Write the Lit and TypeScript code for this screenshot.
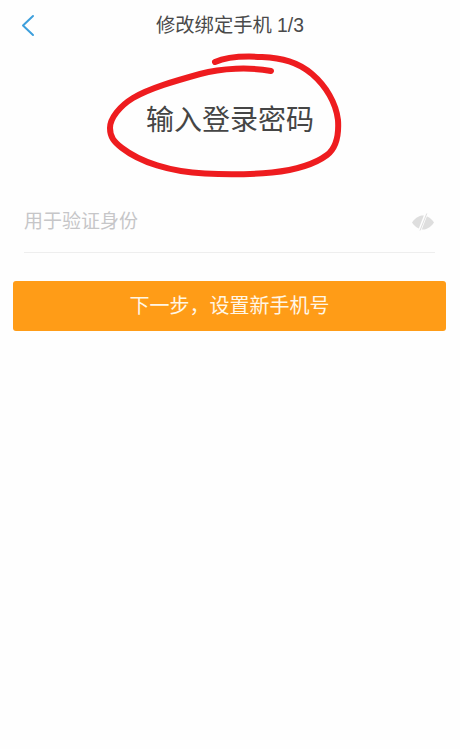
import { LitElement, html, css } from "lit";
import { customElement } from "lit/decorators.js";

@customElement("app-root")
export class AppRoot extends LitElement {
  static styles = css`
    :host {
      display: block;
      position: relative;
      width: 460px;
      height: 749px;
      overflow: hidden;
      background: #fefefe;
      font-family: "Liberation Sans", "Noto Sans CJK SC", sans-serif;
    }
    .header {
      display: flex;
      align-items: center;
      justify-content: center;
      position: relative;
      height: 50px;
      color: #4a4a4a;
      font-size: 19.3px;
    }
    .title {
      margin-top: -2px;
    }
    .back {
      position: absolute;
      left: 20px;
      top: 13px;
      width: 16px;
      height: 24px;
    }
    .heading {
      margin: 0;
      padding-top: 51px;
      height: 40px;
      line-height: 40px;
      text-align: center;
      font-size: 28px;
      font-weight: 400;
      color: #454545;
    }
    .field {
      display: flex;
      align-items: center;
      justify-content: space-between;
      margin: 49px 25px 0 24px;
      height: 62px;
      border-bottom: 1.5px solid #eeeeee;
    }
    .placeholder {
      font-size: 19px;
      color: #c6c6c8;
      line-height: 24px;
      margin-top: 1px;
    }
    .eye {
      width: 24px;
      height: 20px;
      margin-top: 2px;
    }
    .next {
      display: flex;
      align-items: center;
      justify-content: center;
      margin: 28px 14px 0 13px;
      height: 50px;
      border-radius: 3px;
      background: #ff9c17;
      color: #fff6e6;
      font-size: 20px;
    }
    .next span {
      margin-top: -3px;
    }
    .ink {
      position: absolute;
      left: 0;
      top: 0;
      pointer-events: none;
    }
  `;

  render() {
    return html`
      <div class="header">
        <svg class="back" viewBox="0 0 16 24" fill="none">
          <path d="M13 3 L3 12.5 L13 22" stroke="#3d9fdc" stroke-width="2" stroke-linecap="round" stroke-linejoin="round" />
        </svg>
        <span class="title">修改绑定手机 1/3</span>
      </div>
      <h1 class="heading">输入登录密码</h1>
      <div class="field">
        <span class="placeholder">用于验证身份</span>
        <svg class="eye" viewBox="0 0 24 20">
          <path d="M1 10.5 C5 5 9 3.5 12 3.5 C15 3.5 19 5 23 10.5 C19 16 15 17.5 12 17.5 C9 17.5 5 16 1 10.5 Z" fill="#dedede" />
          <path d="M15.5 1 L8.5 19" stroke="#fefefe" stroke-width="3.2" />
          <path d="M15.8 1.5 L9 18.5" stroke="#dedede" stroke-width="1" />
        </svg>
      </div>
      <div class="next"><span>下一步${"\uFF0C"}设置新手机号</span></div>
      <svg class="ink" width="460" height="749" viewBox="0 0 460 749" fill="none">
        <path
          d="M271 71 C250 67 222 68 200 74 C175 81 150 88 133 98 C120 106 110 118 110 128 C110 137 114 142 122 148 C140 162 170 172 205 173.5 C230 175 255 174 272 172.5 C295 170 315 164 327 155 C336 148 339 135 338 120 C336 103 326 86 312 74 C298 62 282 58 262 57 C245 56 226 57 215 62"
          stroke="#ee1c1f"
          stroke-width="6"
          stroke-linecap="round"
          stroke-linejoin="round"
        />
      </svg>
    `;
  }
}
